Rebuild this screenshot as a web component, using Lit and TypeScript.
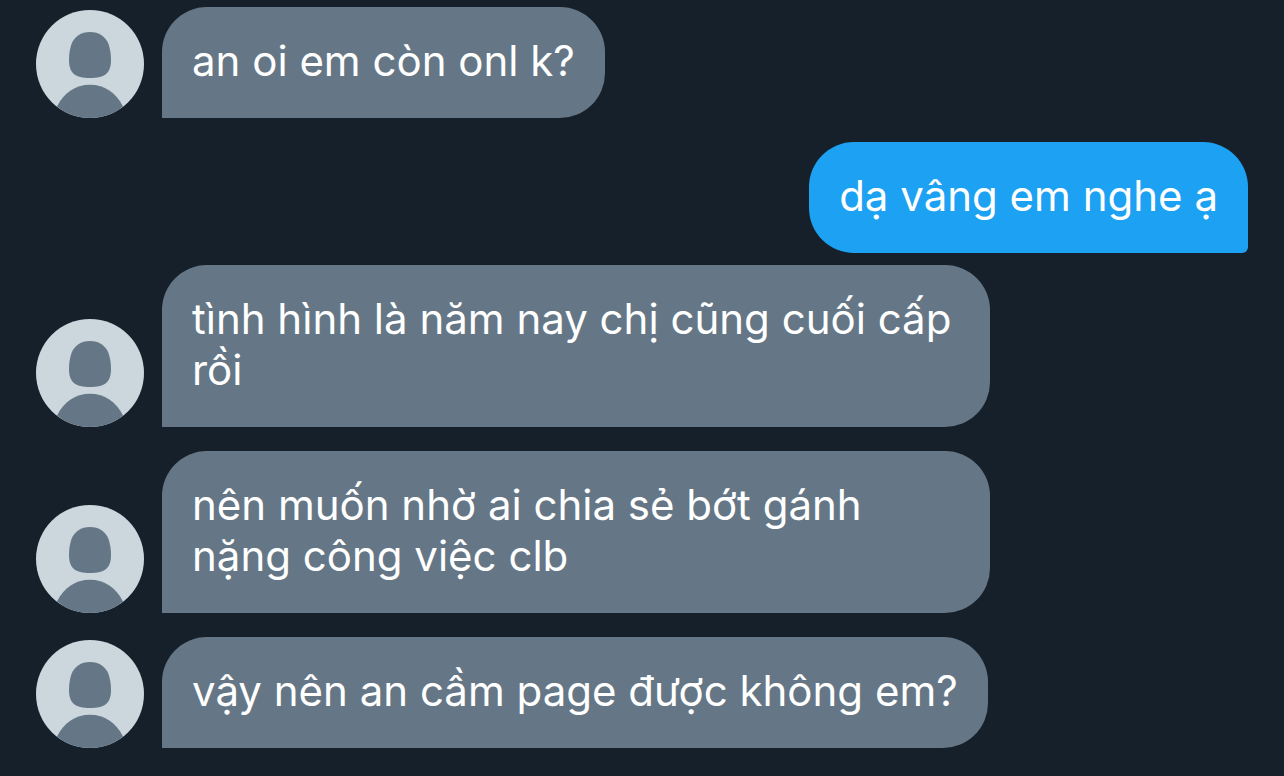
import { LitElement, html, css } from "lit";
import { customElement, property } from "lit/decorators.js";

@customElement("user-avatar")
class UserAvatar extends LitElement {
  static styles = css`
    :host { display: block; flex: none; width: 108px; height: 108px; }
    .avatar { display: block; width: 100%; height: 100%; border-radius: 50%; background: #ccd6dd; }
    .person { fill: #657786; }
  `;
  render() {
    return html`<svg class="avatar" viewBox="0 0 108 108" role="img" aria-label="Avatar">
      <path class="person" d="M54 22C63 22 69.500 26.500 72.500 34C74.300 39 75 45 75 50C75 63 69 68 54 68C39 68 33 63 33 50C33 45 33.700 39 35.500 34C38.500 26.500 45 22 54 22Z" />
      <path class="person" d="M21 96.500C28 82.500 39.500 74.700 54 74.700C68.500 74.700 80 82.500 87 96.500C78 105 67 109 54 109C41 109 30 105 21 96.500Z" />
    </svg>`;
  }
}

@customElement("chat-message")
class ChatMessage extends LitElement {
  @property() text = "";
  @property({ type: Boolean, reflect: true }) own = false;
  static styles = css`
    :host { display: flex; align-items: flex-end; gap: 18px; }
    :host([own]) { justify-content: flex-end; }
    .bubble {
      box-sizing: border-box; max-width: 828px; margin: 0; padding: 28px 30px 32px;
      border-radius: 45px 45px 45px 0; background: #657786; color: #fff;
      font: 42px/51px Inter, "Liberation Sans", sans-serif;
    }
    .own { background: #1da1f2; border-radius: 45px 45px 6px 45px; }
  `;
  render() {
    return this.own
      ? html`<p class="bubble own">${this.text}</p>`
      : html`<user-avatar></user-avatar><p class="bubble">${this.text}</p>`;
  }
}

@customElement("app-root")
class AppRoot extends LitElement {
  static styles = css`
    :host { display: block; box-sizing: border-box; min-height: 100vh; background: #16202a; }
    .thread { display: flex; flex-direction: column; gap: 24px; padding: 7px 36px 28px; }
    .group { display: flex; flex-direction: column; gap: 12px; }
  `;
  render() {
    return html`<main class="thread">
      <chat-message text="an oi em còn onl k?"></chat-message>
      <div class="group">
        <chat-message own text="dạ vâng em nghe ạ"></chat-message>
        <chat-message text="tình hình là năm nay chị cũng cuối cấp rồi"></chat-message>
      </div>
      <chat-message text="nên muốn nhờ ai chia sẻ bớt gánh nặng công việc clb"></chat-message>
      <chat-message text="vậy nên an cầm page được không em?"></chat-message>
    </main>`;
  }
}
